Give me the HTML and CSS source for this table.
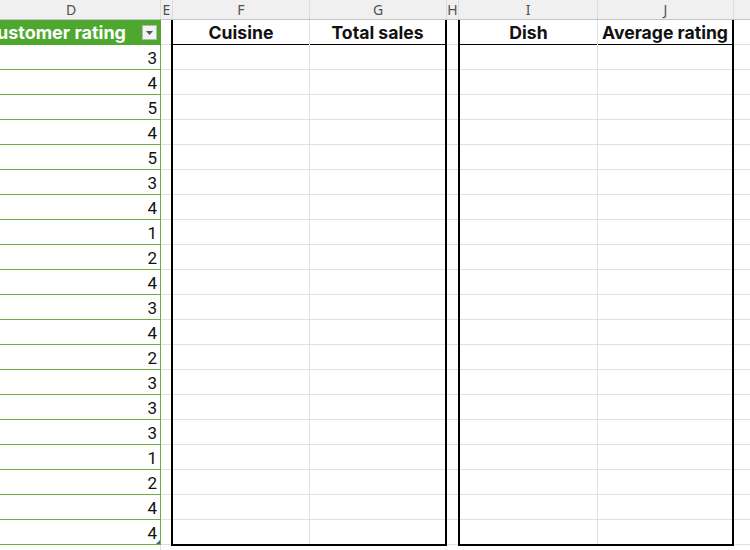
FILE: index.html
```html
<!DOCTYPE html>
<html>
<head>
<meta charset="utf-8">
<link rel="stylesheet" href="styles.css">
</head>
<body>
<div class="sheet">
  <div class="colheads">
    <div class="ch ch-d">D</div>
    <div class="ch ch-e">E</div>
    <div class="ch ch-f">F</div>
    <div class="ch ch-g">G</div>
    <div class="ch ch-h">H</div>
    <div class="ch ch-i">I</div>
    <div class="ch ch-j">J</div>
    <div class="ch ch-k"></div>
  </div>
  <div class="grid">
    <div class="col col-d">
      <div class="hdr-green">
        <span class="hdr-text">Customer rating</span>
        <span class="filter"><svg width="7" height="4" viewBox="0 0 7 4"><path d="M0 0H7L3.5 4Z" fill="#555"/></svg></span>
      </div>
      <div class="num">3</div>
      <div class="num">4</div>
      <div class="num">5</div>
      <div class="num">4</div>
      <div class="num">5</div>
      <div class="num">3</div>
      <div class="num">4</div>
      <div class="num">1</div>
      <div class="num">2</div>
      <div class="num">4</div>
      <div class="num">3</div>
      <div class="num">4</div>
      <div class="num">2</div>
      <div class="num">3</div>
      <div class="num">3</div>
      <div class="num">3</div>
      <div class="num">1</div>
      <div class="num">2</div>
      <div class="num">4</div>
      <div class="num last">4<span class="handle"></span></div>
      <div class="filler"></div>
    </div>
    <div class="col col-e gridlines"></div>
    <div class="tbl">
      <div class="tcol tcol-f">
        <div class="th">Cuisine</div>
        <div class="tbody gridlines"></div>
      </div>
      <div class="tcol tcol-g">
        <div class="th">Total sales</div>
        <div class="tbody gridlines"></div>
      </div>
    </div>
    <div class="col col-h gridlines"></div>
    <div class="tbl">
      <div class="tcol tcol-i">
        <div class="th">Dish</div>
        <div class="tbody gridlines"></div>
      </div>
      <div class="tcol tcol-j">
        <div class="th">Average rating</div>
        <div class="tbody gridlines"></div>
      </div>
    </div>
    <div class="col col-k gridlines"></div>
  </div>
</div>
</body>
</html>
```
FILE: styles.css
```css
* { box-sizing: border-box; }
html, body { margin: 0; padding: 0; background: #fff; }
body { width: 750px; height: 550px; overflow: hidden; font-family: Inter, "Noto Sans", sans-serif; }

.sheet { display: flex; flex-direction: column; width: 750px; height: 550px; }

.colheads { display: flex; height: 20px; background: #f0f0f0; border-bottom: 1px solid #c4c4c4; }
.ch { height: 19px; border-right: 1px solid #dcdcdc; color: #505050; font-family: "Noto Sans", sans-serif; font-size: 14px; line-height: 19px; text-align: center; }
.ch-d { width: 161px; padding-right: 18px; }
.ch-e { width: 12px; }
.ch-f { width: 137px; }
.ch-g { width: 137px; }
.ch-h { width: 12px; }
.ch-i { width: 139px; }
.ch-j { width: 136px; }
.ch-k { flex: 1; border-right: 0; }

.grid { display: flex; flex: 1; }

.gridlines {
  background: repeating-linear-gradient(to bottom, transparent 0 24px, #e1e1e1 24px 25px);
}

.col { display: flex; flex-direction: column; }
.col-d { width: 161px; }
.col-e { width: 10px; }
.col-h { width: 11px; border-right: 0; }
.col-k { flex: 1; }

.hdr-green {
  height: 25px; background: #4ea72e; border-right: 1px solid #4ea72e;
  display: flex; align-items: center; justify-content: flex-end; padding-right: 3px;
  overflow: hidden; white-space: nowrap;
}
.hdr-text { color: #fff; font-weight: 700; font-size: 18px; line-height: 26px; margin-right: 16px; }
.filter {
  flex: none; width: 15px; height: 15px; background: #f2f2f2; border: 1px solid #b5b5b5;
  display: flex; align-items: center; justify-content: center;
}
.num {
  position: relative; height: 25px; border-bottom: 1px solid #6aae48; border-right: 1px solid #6aae48;
  text-align: right; padding-right: 3px; font-family: Roboto, sans-serif; font-size: 17px; line-height: 26px; color: #111;
}
.handle {
  position: absolute; right: 0; bottom: 0; width: 0; height: 0;
  border-left: 4px solid transparent; border-bottom: 4px solid #3d6b8c;
}
.filler { flex: 1; border-right: 1px solid #e1e1e1; }

.tbl {
  display: flex; width: 276px; height: 526px;
  border-left: 2px solid #000; border-right: 2px solid #000; border-bottom: 2px solid #000;
}
.tcol { display: flex; flex-direction: column; }
.tcol-f { width: 137px; border-right: 1px solid #e1e1e1; }
.tcol-g { width: 135px; }
.tcol-i { width: 138px; border-right: 1px solid #e1e1e1; }
.tcol-j { width: 134px; }
.th {
  height: 25px; border-bottom: 1px solid #000; text-align: center;
  font-weight: 700; font-size: 17.6px; line-height: 26px; color: #111; white-space: nowrap;
}
.tbody { flex: 1; }
```
